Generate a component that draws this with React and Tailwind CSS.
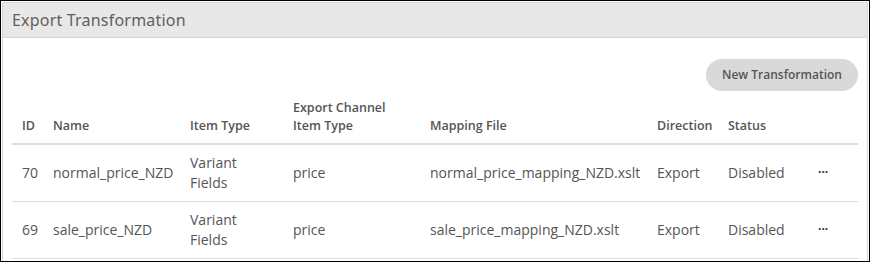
export default function App() {
  const cols = "grid-cols-[31px_137px_103px_137px_227px_71px_90px_49px]";
  const rows = [
    { id: "70", name: "normal_price_NZD", file: "normal_price_mapping_NZD.xslt" },
    { id: "69", name: "sale_price_NZD", file: "sale_price_mapping_NZD.xslt" },
  ];
  return (
    <div className="w-[870px] h-[262px] border border-black bg-white pl-px pt-px overflow-hidden" style={{ fontFamily: '"Open Sans", sans-serif' }}>
      <div className="w-[866px] h-[300px] border border-[#d6d6d6] border-b-0">
        <div className="h-[35px] bg-[#e8e8e8] border-b border-[#d6d6d6] pl-[9px] flex items-center">
          <span className="text-[16px] text-[#5f5f5f] tracking-[0.2px]" style={{ fontFamily: '"Noto Sans", sans-serif' }}>Export Transformation</span>
        </div>
        <div className="pl-[9px] pr-[9px] pt-[21px]">
          <div className="flex justify-end">
            <button className="h-[32px] w-[152px] rounded-full bg-[#d9d9d9] text-[12px] font-semibold text-[#555]">New Transformation</button>
          </div>
          <div className={`grid ${cols} border-b-2 border-[#dddddd] text-[12.5px] font-semibold text-[#555] leading-[18px] items-end`}>
            {["ID", "Name", "Item Type", "Export Channel Item Type", "Mapping File", "Direction", "Status", ""].map((h, i) => (
              <div key={i} className="pl-[10px] pt-[8px] pb-[8px]">
                {i === 3 ? (<>Export Channel<br />Item Type</>) : h}
              </div>
            ))}
          </div>
          {rows.map((r) => (
            <div key={r.id} className={`grid ${cols} border-b border-[#dddddd] text-[14px] text-[#555] leading-[20px] items-center h-[57px]`}>
              <div className="pl-[10px]">{r.id}</div>
              <div className="pl-[10px]">{r.name}</div>
              <div className="pl-[10px]">Variant<br />Fields</div>
              <div className="pl-[10px]">price</div>
              <div className="pl-[10px]">{r.file}</div>
              <div className="pl-[10px]">Export</div>
              <div className="pl-[10px]">Disabled</div>
              <div className="pl-[10px] font-bold text-[#333] text-[12px] leading-none pb-[2px]">···</div>
            </div>
          ))}
        </div>
      </div>
    </div>
  );
}
